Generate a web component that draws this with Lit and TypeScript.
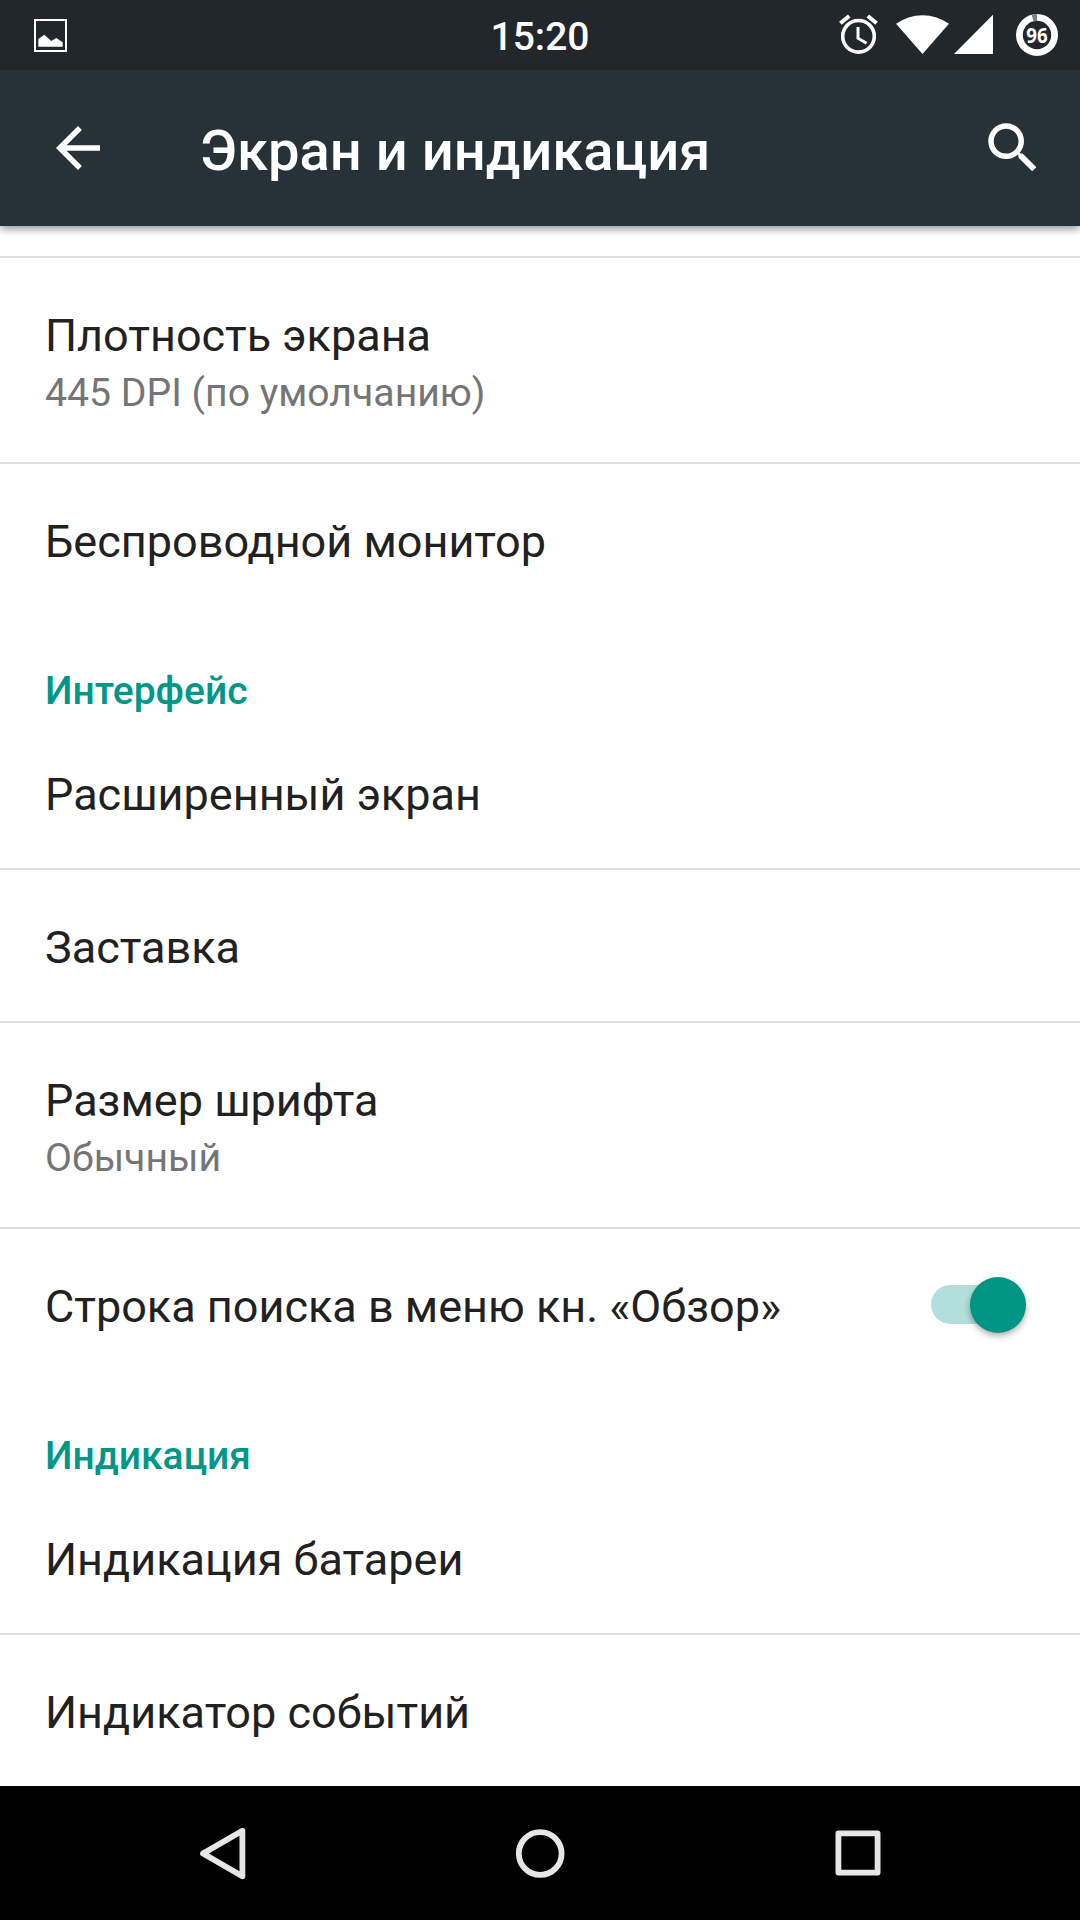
import { LitElement, html, css, svg, nothing } from "lit";
import { customElement, property } from "lit/decorators.js";

interface Preference {
  title: string;
  summary?: string;
  checked?: boolean;
}

interface Section {
  heading?: string;
  items: Preference[];
}

const SECTIONS: Section[] = [
  {
    items: [
      { title: "Плотность экрана", summary: "445 DPI (по умолчанию)" },
      { title: "Беспроводной монитор" },
    ],
  },
  {
    heading: "Интерфейс",
    items: [
      { title: "Расширенный экран" },
      { title: "Заставка" },
      { title: "Размер шрифта", summary: "Обычный" },
      { title: "Строка поиска в меню кн. «Обзор»", checked: true },
    ],
  },
  {
    heading: "Индикация",
    items: [{ title: "Индикация батареи" }, { title: "Индикатор событий" }],
  },
];

@customElement("status-bar")
class StatusBar extends LitElement {
  static styles = css`
    :host {
      display: grid;
      grid-template-columns: 1fr auto 1fr;
      height: 70px;
      background: #21272b;
      color: #fff;
    }
    svg {
      display: block;
      height: 70px;
    }
    .left {
      padding-left: 32px;
    }
    .clock {
      font-size: 39px;
      font-weight: 500;
      line-height: 74px;
    }
    .right {
      display: flex;
      justify-content: flex-end;
      padding-right: 20px;
    }
    .level {
      font: 700 22px "Open Sans", sans-serif;
    }
  `;

  render() {
    return html`
      <div class="left">
        <svg width="38" viewBox="32 0 38 70">
          <rect x="35" y="20" width="31" height="31" fill="none" stroke="#fff" stroke-width="2" />
          <path d="M38.3 46.7V39L44.3 34.8L51.3 41L56.3 38L62.7 42.3V46.7Z" fill="#fff" />
        </svg>
      </div>
      <div class="clock">15:20</div>
      <div class="right">
        <svg width="56" viewBox="838 0 56 70">
          <g fill="none" stroke="#fff">
            <circle cx="858.5" cy="36.3" r="15.8" stroke-width="3.6" />
            <path d="M858 27V38.2L866.6 43.2" stroke-width="3" />
            <path d="M840.4 23.3L849.2 16M867.8 16L876.6 23.3" stroke-width="4" />
          </g>
        </svg>
        <svg width="58" viewBox="894 0 58 70">
          <path d="M896 23.8A45 45 0 0 1 949 23.8L922.5 54Z" fill="#fff" />
        </svg>
        <svg width="62" viewBox="952 0 62 70">
          <path d="M954 54L993 14.7V54Z" fill="#fff" />
        </svg>
        <svg width="46" viewBox="1014 0 46 70">
          <circle cx="1037" cy="35" r="17.6" fill="none" stroke="#fff" stroke-width="6.8" />
          <path d="M1031.6 14.7A21 21 0 0 1 1037 14V21A14 14 0 0 0 1033.6 21.5Z" fill="#7c8082" />
          <text class="level" x="1026.2" y="43" textLength="21.4" lengthAdjust="spacingAndGlyphs" fill="#fff">96</text>
        </svg>
      </div>
    `;
  }
}

@customElement("tool-bar")
class ToolBar extends LitElement {
  static styles = css`
    :host {
      display: flex;
      align-items: flex-start;
      box-sizing: border-box;
      height: 156px;
      padding: 45px 34px 0 45px;
      background: #263238;
      color: #fff;
      box-shadow: 0 3px 8px rgba(0, 0, 0, 0.42);
      position: relative;
    }
    .icon {
      display: block;
      width: 66px;
      height: 66px;
      fill: #fff;
    }
    .title {
      flex: 1;
      margin: 1px 0 0 89px;
      font-size: 56.1px;
      font-weight: 500;
      line-height: 70px;
      white-space: nowrap;
    }
  `;

  @property() heading = "";

  render() {
    return html`
      <svg class="icon" viewBox="0 0 24 24">
        <path d="M20 11H7.83l5.59-5.59L12 4l-8 8 8 8 1.41-1.41L7.83 13H20v-2z" />
      </svg>
      <h1 class="title">${this.heading}</h1>
      <svg class="icon" viewBox="0 0 24 24">
        <path
          d="M15.5 14h-.79l-.28-.27C15.41 12.59 16 11.11 16 9.5 16 5.91 13.09 3 9.5 3S3 5.91 3 9.5 5.91 16 9.5 16c1.61 0 3.09-.59 4.23-1.57l.27.28v.79l5 4.99L20.49 19l-4.99-5zm-6 0C7.01 14 5 11.99 5 9.5S7.01 5 9.5 5 14 7.01 14 9.5 11.99 14 9.5 14z"
        />
      </svg>
    `;
  }
}

@customElement("preference-row")
class PreferenceRow extends LitElement {
  static styles = css`
    :host {
      display: flex;
      justify-content: space-between;
      box-sizing: border-box;
      min-height: 151px;
      padding: 0 54.5px 0 45px;
    }
    .text {
      padding: 48px 0 43px;
    }
    .text.double {
      padding-bottom: 44px;
    }
    .title {
      font-size: 45px;
      line-height: 60px;
      color: #212121;
      white-space: nowrap;
    }
    .summary {
      margin-top: 2px;
      font-size: 39.2px;
      line-height: 50px;
      color: #757575;
      white-space: nowrap;
    }
    .switch {
      align-self: center;
      display: flex;
      align-items: center;
      box-sizing: border-box;
      width: 95px;
      height: 57px;
    }
    .track {
      width: 80px;
      height: 39px;
      border-radius: 20px;
      background: #b2dfdb;
    }
    .thumb {
      flex: none;
      width: 56px;
      height: 56px;
      margin-left: -41px;
      border-radius: 50%;
      background: #009485;
      box-shadow: 0 3px 6px rgba(0, 0, 0, 0.32);
    }
  `;

  @property({ attribute: false }) item!: Preference;

  render() {
    const { title, summary, checked } = this.item;
    return html`
      <div class="text ${summary ? "double" : ""}">
        <div class="title">${title}</div>
        ${summary ? html`<div class="summary">${summary}</div>` : nothing}
      </div>
      ${checked
        ? html`<div class="switch"><div class="track"></div><div class="thumb"></div></div>`
        : nothing}
    `;
  }
}

@customElement("nav-bar")
class NavBar extends LitElement {
  static styles = css`
    :host {
      display: flex;
      justify-content: center;
      align-items: center;
      gap: 251.5px;
      height: 134px;
      background: #000;
    }
    .icon {
      width: 66px;
      height: 66px;
      fill: none;
      stroke: #e6e6e6;
      stroke-width: 5.8;
      stroke-linejoin: round;
    }
  `;

  render() {
    const shapes = [
      svg`<path d="M13 33.5L52.4 10.7V56.3Z" />`,
      svg`<circle cx="33.2" cy="33.5" r="21.4" />`,
      svg`<rect x="13.4" y="13.4" width="39.2" height="39.2" />`,
    ];
    return shapes.map((shape) => html`<svg class="icon" viewBox="0 0 66 66">${shape}</svg>`);
  }
}

@customElement("app-root")
class AppRoot extends LitElement {
  static styles = css`
    :host {
      display: flex;
      flex-direction: column;
      width: 1080px;
      height: 1920px;
      overflow: hidden;
      background: #fff;
      font-family: Roboto, sans-serif;
    }
    .list {
      flex: 1;
      min-height: 0;
      box-sizing: border-box;
      padding-top: 30px;
      overflow: hidden;
    }
    .section:first-child {
      border-top: 2px solid #dedede;
    }
    .heading {
      box-sizing: border-box;
      height: 102px;
      margin: 0;
      padding: 51px 45px 0;
      font-size: 39px;
      font-weight: 500;
      line-height: 50px;
      color: #009688;
      white-space: nowrap;
    }
    .row + .row {
      border-top: 2px solid #dedede;
      min-height: 153px;
    }
  `;

  render() {
    return html`
      <status-bar></status-bar>
      <tool-bar heading="Экран и индикация"></tool-bar>
      <main class="list">
        ${SECTIONS.map(
          (section) => html`
            <section class="section">
              ${section.heading ? html`<h2 class="heading">${section.heading}</h2>` : nothing}
              ${section.items.map(
                (item) => html`<preference-row class="row" .item=${item}></preference-row>`
              )}
            </section>
          `
        )}
      </main>
      <nav-bar></nav-bar>
    `;
  }
}
